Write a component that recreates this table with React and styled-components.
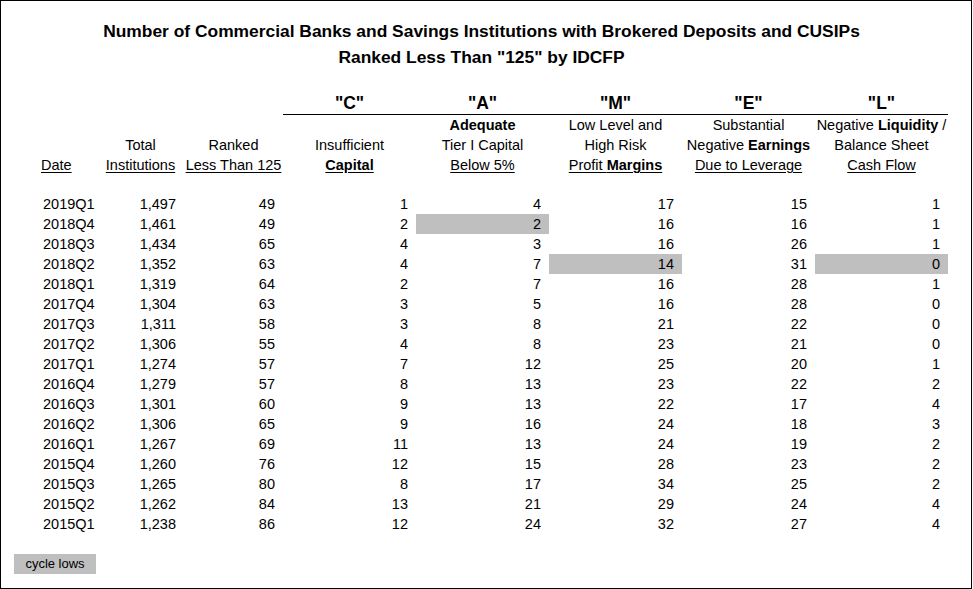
import * as React from "react";
import styled, { createGlobalStyle } from "styled-components";

const rows = [
  ["2019Q1", "1,497", 49, 1, 4, 17, 15, 1],
  ["2018Q4", "1,461", 49, 2, 2, 16, 16, 1],
  ["2018Q3", "1,434", 65, 4, 3, 16, 26, 1],
  ["2018Q2", "1,352", 63, 4, 7, 14, 31, 0],
  ["2018Q1", "1,319", 64, 2, 7, 16, 28, 1],
  ["2017Q4", "1,304", 63, 3, 5, 16, 28, 0],
  ["2017Q3", "1,311", 58, 3, 8, 21, 22, 0],
  ["2017Q2", "1,306", 55, 4, 8, 23, 21, 0],
  ["2017Q1", "1,274", 57, 7, 12, 25, 20, 1],
  ["2016Q4", "1,279", 57, 8, 13, 23, 22, 2],
  ["2016Q3", "1,301", 60, 9, 13, 22, 17, 4],
  ["2016Q2", "1,306", 65, 9, 16, 24, 18, 3],
  ["2016Q1", "1,267", 69, 11, 13, 24, 19, 2],
  ["2015Q4", "1,260", 76, 12, 15, 28, 23, 2],
  ["2015Q3", "1,265", 80, 8, 17, 34, 25, 2],
  ["2015Q2", "1,262", 84, 13, 21, 29, 24, 4],
  ["2015Q1", "1,238", 86, 12, 24, 32, 27, 4],
];

// cycle lows: "row:col"
const lows = new Set(["1:4", "3:5", "3:7"]);

const GlobalStyle = createGlobalStyle`
  html, body {
    margin: 0;
    padding: 0;
    background: #fff;
  }
  body {
    font-family: "Liberation Sans", Arial, sans-serif;
    color: #000;
  }
`;

const Frame = styled.div`
  width: 972px;
  height: 589px;
  box-sizing: border-box;
  border: 1px solid #000;
  padding-top: 17px;
`;

const Title = styled.div`
  font-size: 17.4px;
  font-weight: bold;
  line-height: 26px;
  text-align: center;
  padding-right: 9px;
`;

const Table = styled.div`
  display: grid;
  grid-template-columns: 96px 87px 99px repeat(5, 133px);
  font-size: 14.5px;
  line-height: 20px;
  margin-top: 22px;
`;

const Letter = styled.div`
  height: 22px;
  line-height: 22px;
  text-align: center;
  font-weight: bold;
  font-size: 17.5px;
  border-bottom: ${(p) => (p.$blank ? "1px solid transparent" : "1px solid #000")};
`;

const Head = styled.div`
  text-align: ${(p) => p.$align || "center"};
  padding-left: ${(p) => (p.$align === "left" ? "40px" : "0")};
  white-space: nowrap;
`;

const Spacer = styled.div`
  grid-column: 1 / -1;
  height: 19px;
`;

const Cell = styled.div`
  height: 20px;
  text-align: ${(p) => p.$align || "right"};
  padding: ${(p) => (p.$align === "left" ? "0 0 0 42px" : "0 8px 0 0")};
  background: ${(p) => (p.$low ? "#bfbfbf" : "transparent")};
`;

const U = styled.span`
  text-decoration: underline;
  text-underline-offset: 2px;
`;

const Legend = styled.div`
  margin: 20px 0 0 13px;
  width: 82px;
  height: 20px;
  line-height: 20px;
  background: #bfbfbf;
  font-size: 13px;
  text-align: center;
`;

const heads = [
  ["", "", <U>Date</U>],
  ["", "Total", <U>Institutions</U>],
  ["", "Ranked", <U>Less Than 125</U>],
  ["", "Insufficient", <U><b>Capital</b></U>],
  [<b>Adequate</b>, "Tier I Capital", <U>Below 5%</U>],
  ["Low Level and", "High Risk", <U>Profit <b>Margins</b></U>],
  ["Substantial", <>Negative <b>Earnings</b></>, <U>Due to Leverage</U>],
  [<>Negative <b>Liquidity</b> /</>, "Balance Sheet", <U>Cash Flow</U>],
];

const App = () => {
  return (
    <>
      <GlobalStyle />
      <Frame>
        <Title>
          <div>Number of Commercial Banks and Savings Institutions with Brokered Deposits and CUSIPs</div>
          <div>Ranked Less Than "125" by IDCFP</div>
        </Title>
        <Table>
          {["", "", "", '"C"', '"A"', '"M"', '"E"', '"L"'].map((t, i) => (
            <Letter key={"l" + i} $blank={i < 3}>{t}</Letter>
          ))}
          {[0, 1, 2].map((line) =>
            heads.map((h, c) => (
              <Head key={line + "-" + c} $align={c === 0 ? "left" : "center"}>
                {h[line] || "\u00a0"}
              </Head>
            ))
          )}
          <Spacer />
          {rows.map((r, ri) =>
            r.map((v, ci) => (
              <Cell key={ri + "-" + ci} $align={ci === 0 ? "left" : "right"} $low={lows.has(ri + ":" + ci)}>
                {v}
              </Cell>
            ))
          )}
        </Table>
        <Legend>cycle lows</Legend>
      </Frame>
    </>
  );
};

export default App;
